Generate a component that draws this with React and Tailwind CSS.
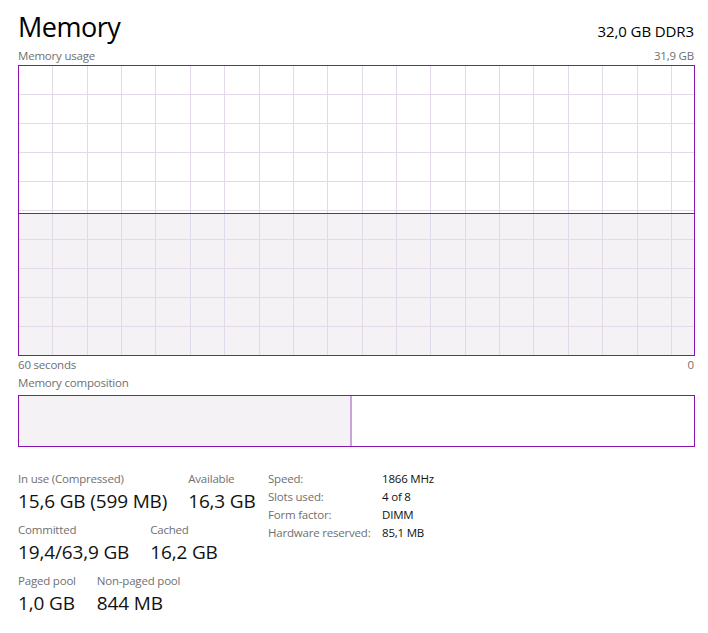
import React from "react";

const PURPLE = "#8b12ae";

function UsageGraph() {
  const W = 675;
  const H = 289;
  const vLines = [];
  for (let k = 0; k < 19; k++) vLines.push(Math.round(33.3 + 34.37 * k));
  const hLines = [];
  for (let k = 0; k < 9; k++) hLines.push(28 + 29 * k);
  const fillTop = 147;
  return (
    <div className="w-[677px] h-[291px] border border-[#8b12ae] bg-white">
      <svg width={W} height={H} className="block" shapeRendering="crispEdges">
        <rect x="0" y={fillTop} width={W} height={H - fillTop} fill="#f4f2f4" />
        {vLines.map((x) => (
          <rect key={"v" + x} x={x} y="0" width="1" height={H} fill="#e3d9e8" />
        ))}
        {hLines.map((y) => (
          <rect key={"h" + y} x="0" y={y} width={W} height="1" fill="#e3d9e8" />
        ))}
        <rect x="0" y={fillTop} width={W} height="1" fill={PURPLE} />
      </svg>
    </div>
  );
}

function Stat({ label, value }) {
  return (
    <div className="flex flex-col">
      <div className="text-[11.5px] leading-[16px] tracking-[-0.2px] text-[#707070]">{label}</div>
      <div className="text-[19px] leading-[25px] tracking-[-0.15px] text-[#111] mt-[2px]">{value}</div>
    </div>
  );
}

export default function App() {
  return (
    <div
      className="w-[708px] h-[633px] bg-white pl-[18px] pr-[14px] overflow-hidden"
      style={{ fontFamily: '"Open Sans", "Noto Sans", sans-serif' }}
    >
      <div className="flex justify-between items-baseline pt-[13px]">
        <div className="text-[27px] leading-[28px] text-black tracking-[-0.5px]">Memory</div>
        <div className="text-[15px] leading-[20px] text-black tracking-[-0.1px]">32,0 GB DDR3</div>
      </div>
      <div className="flex justify-between mt-[7px] text-[11.5px] leading-[16px] tracking-[-0.2px] text-[#707070]">
        <span>Memory usage</span>
        <span>31,9 GB</span>
      </div>
      <div className="mt-[1px]">
        <UsageGraph />
      </div>
      <div className="flex justify-between mt-[1px] text-[11.5px] leading-[16px] tracking-[-0.2px] text-[#707070]">
        <span>60 seconds</span>
        <span>0</span>
      </div>
      <div className="mt-[2px] text-[11.5px] leading-[16px] tracking-[-0.2px] text-[#707070]">Memory composition</div>
      <div className="mt-[4px] w-[677px] h-[52px] border border-[#8b12ae] flex">
        <div className="w-[331px] h-full bg-[#f4f2f4]" />
        <div className="w-[2px] h-full bg-[#c9a3d9]" />
        <div className="flex-1 h-full bg-white" />
      </div>
      <div className="flex items-start mt-[24px]">
        <div className="w-[250px] flex flex-col gap-[8px]">
          <div className="flex gap-[21px]">
            <Stat label="In use (Compressed)" value="15,6 GB (599 MB)" />
            <Stat label="Available" value="16,3 GB" />
          </div>
          <div className="flex gap-[21px]">
            <Stat label="Committed" value="19,4/63,9 GB" />
            <Stat label="Cached" value="16,2 GB" />
          </div>
          <div className="flex gap-[21px]">
            <Stat label="Paged pool" value="1,0 GB" />
            <Stat label="Non-paged pool" value="844 MB" />
          </div>
        </div>
        <div className="grid grid-cols-[114px_auto] content-start text-[11.5px] leading-[18px] tracking-[-0.2px] -mt-[1px]">
          <span className="text-[#707070]">Speed:</span>
          <span className="text-[#111]">1866 MHz</span>
          <span className="text-[#707070]">Slots used:</span>
          <span className="text-[#111]">4 of 8</span>
          <span className="text-[#707070]">Form factor:</span>
          <span className="text-[#111]">DIMM</span>
          <span className="text-[#707070]">Hardware reserved:</span>
          <span className="text-[#111]">85,1 MB</span>
        </div>
      </div>
    </div>
  );
}
